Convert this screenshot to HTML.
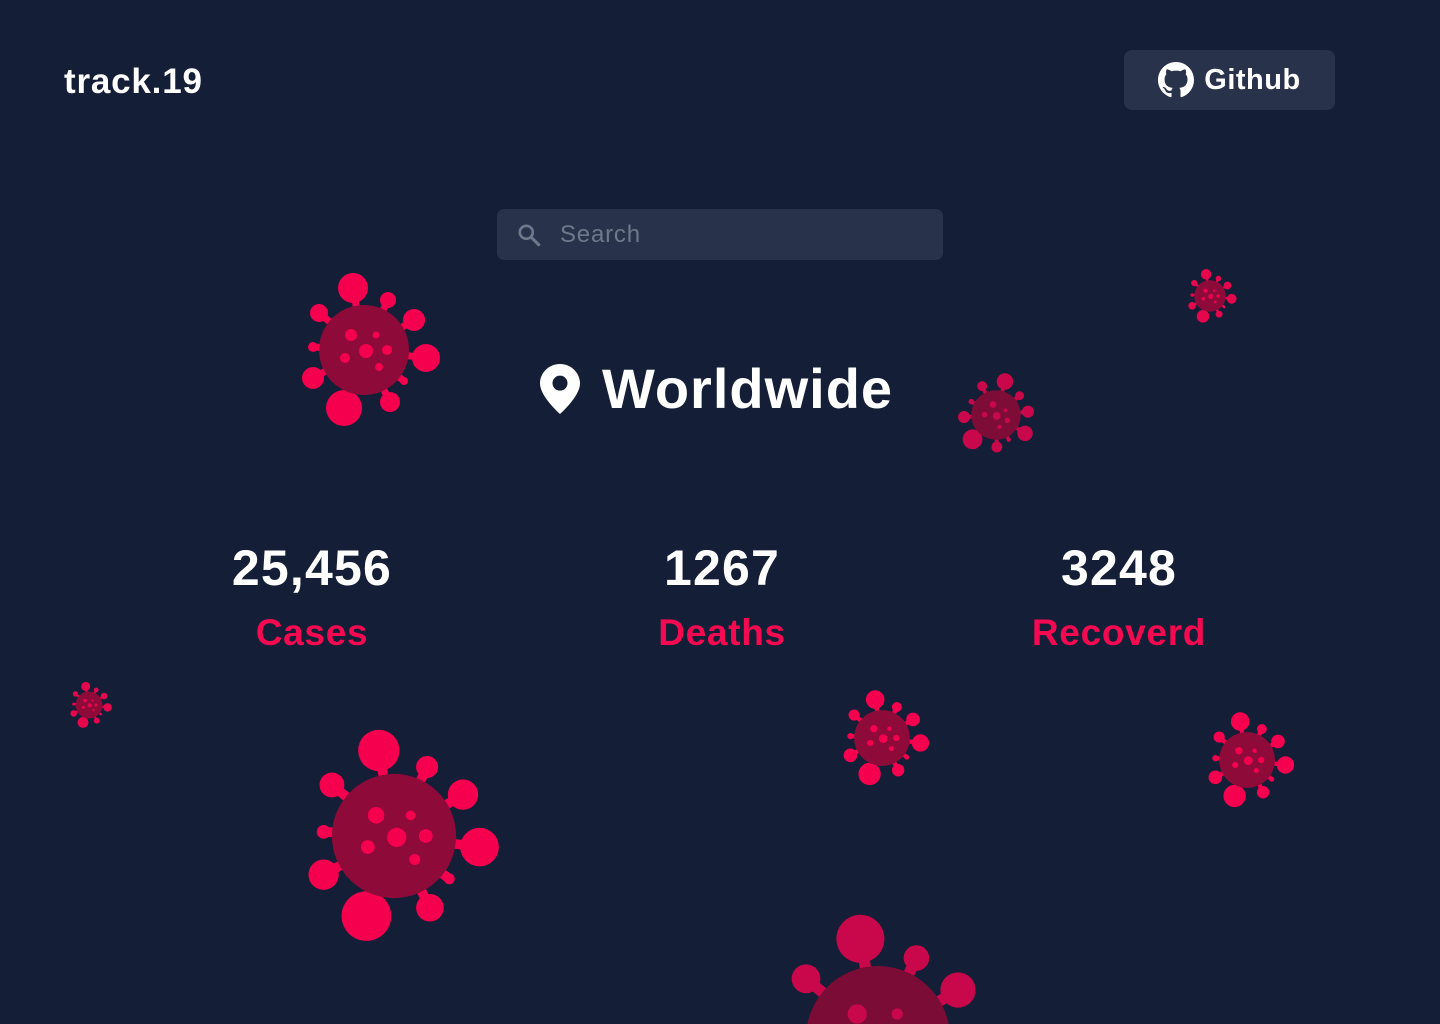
<!DOCTYPE html>
<html><head><meta charset="utf-8"><style>
html,body{margin:0;padding:0;overflow:hidden;width:1440px;height:1024px}
body{background:#141e36;font-family:"Liberation Sans",sans-serif;color:#fff}
#w{position:relative;width:1440px;height:1024px;overflow:hidden}
.logo{position:absolute;left:64px;top:62px;font-size:35px;font-weight:bold;letter-spacing:0.8px}
.gh{position:absolute;left:1124px;top:50px;width:211px;height:60px;background:#28324a;border-radius:8px;display:flex;align-items:center;justify-content:center;gap:10px;font-size:29px;font-weight:bold;letter-spacing:0.5px}
.search{position:absolute;left:497px;top:209px;width:446px;height:51px;background:#28324a;border-radius:7px}
.search span{position:absolute;left:63px;top:12px;font-size:24px;color:#6f788a;letter-spacing:0.8px}
.loc{position:absolute;left:540px;top:356px;display:flex;align-items:center;gap:22px;font-size:56px;font-weight:bold;letter-spacing:1px}
.stat{position:absolute;top:538px;width:400px;text-align:center}
.stat .n{font-size:50px;font-weight:bold;line-height:60px;letter-spacing:1.2px}
.stat .l{font-size:37px;font-weight:bold;color:#f50a51;line-height:70px;letter-spacing:0.7px}
svg.v{position:absolute;overflow:hidden}
</style></head><body><div id="w">
<svg width="0" height="0" style="position:absolute">
<defs>
<g id="vir">
<g stroke="currentColor" stroke-width="7">
<line x1="0" y1="0" x2="-11" y2="-62"/><line x1="0" y1="0" x2="24" y2="-50"/><line x1="0" y1="0" x2="50" y2="-30"/><line x1="0" y1="0" x2="62" y2="8"/><line x1="0" y1="0" x2="40" y2="31"/><line x1="0" y1="0" x2="26" y2="52"/><line x1="0" y1="0" x2="-20" y2="58"/><line x1="0" y1="0" x2="-51" y2="28"/><line x1="0" y1="0" x2="-51" y2="-3"/><line x1="0" y1="0" x2="-45" y2="-37"/>
</g>
<g fill="currentColor">
<circle cx="-11" cy="-62" r="15"/><circle cx="24" cy="-50" r="8"/><circle cx="50" cy="-30" r="11"/><circle cx="62" cy="8" r="14"/><circle cx="40" cy="31" r="4"/><circle cx="26" cy="52" r="10"/><circle cx="-20" cy="58" r="18"/><circle cx="-51" cy="28" r="11"/><circle cx="-51" cy="-3" r="5"/><circle cx="-45" cy="-37" r="9"/>
</g>
<circle r="45" fill="var(--b)"/>
<g fill="currentColor">
<circle cx="-13" cy="-15" r="6"/><circle cx="12" cy="-15" r="3.5"/><circle cx="2" cy="1" r="7"/><circle cx="23" cy="0" r="5"/><circle cx="-19" cy="8" r="5"/><circle cx="15" cy="17" r="4"/>
</g>
</g>
</defs></svg>

<div class="logo">track.19</div>
<div class="gh"><svg width="36" height="36" viewBox="0 0 16 16"><path fill="#fff" d="M8 0C3.58 0 0 3.58 0 8c0 3.54 2.29 6.53 5.47 7.59.4.07.55-.17.55-.38 0-.19-.01-.82-.01-1.49-2.01.37-2.53-.49-2.69-.94-.09-.23-.48-.94-.82-1.13-.28-.15-.68-.52-.01-.53.63-.01 1.08.58 1.23.82.72 1.21 1.87.87 2.33.66.07-.52.28-.87.51-1.07-1.78-.2-3.64-.89-3.64-3.95 0-.87.31-1.59.82-2.15-.08-.2-.36-1.02.08-2.12 0 0 .67-.21 2.2.82.64-.18 1.32-.27 2-.27.68 0 1.36.09 2 .27 1.53-1.04 2.2-.82 2.2-.82.44 1.1.16 1.92.08 2.12.51.56.82 1.27.82 2.15 0 3.07-1.87 3.75-3.65 3.95.29.25.54.73.54 1.48 0 1.07-.01 1.93-.01 2.2 0 .21.15.46.55.38A8.013 8.013 0 0016 8c0-4.42-3.58-8-8-8z"/></svg>Github</div>

<div class="search"><svg style="position:absolute;left:19px;top:13px" width="26" height="26" viewBox="0 0 24 24"><circle cx="9.5" cy="9.5" r="6" fill="none" stroke="#6f788a" stroke-width="2.4"/><line x1="14" y1="14" x2="21" y2="21" stroke="#6f788a" stroke-width="2.8" stroke-linecap="round"/></svg><span>Search</span></div>

<div class="loc"><svg width="40" height="50" viewBox="0 0 24 30"><path fill="#fff" d="M12 0C5.4 0 0 5.2 0 11.7 0 19.5 12 30 12 30s12-10.5 12-18.3C24 5.2 18.6 0 12 0zm0 16a4.5 4.5 0 110-9 4.5 4.5 0 010 9z"/></svg>Worldwide</div>

<div class="stat" style="left:112px"><div class="n">25,456</div><div class="l">Cases</div></div>
<div class="stat" style="left:522px"><div class="n">1267</div><div class="l">Deaths</div></div>
<div class="stat" style="left:919px"><div class="n">3248</div><div class="l">Recoverd</div></div>

<svg class="v" style="left:0;top:0" width="1440" height="1024">
<use href="#vir" transform="translate(364,350)" style="color:#f5004f;--b:#8e0a38"/>
<use href="#vir" transform="translate(1210,296) scale(0.35)" style="color:#e6064e;--b:#8e0a38"/>
<use href="#vir" transform="translate(996,415) rotate(25) scale(0.55)" style="color:#c8084a;--b:#7d0c37"/>
<use href="#vir" transform="translate(89,705) scale(0.3)" style="color:#e6064e;--b:#8e0a38"/>
<use href="#vir" transform="translate(394,836) scale(1.38)" style="color:#f5004f;--b:#8e0a38"/>
<use href="#vir" transform="translate(882,738) scale(0.62)" style="color:#f5004f;--b:#8e0a38"/>
<use href="#vir" transform="translate(1247,760) scale(0.62)" style="color:#f5004f;--b:#8e0a38"/>
<use href="#vir" transform="translate(878,1038) scale(1.6)" style="color:#c8084a;--b:#7a0c35"/>
</svg>
</div></body></html>
